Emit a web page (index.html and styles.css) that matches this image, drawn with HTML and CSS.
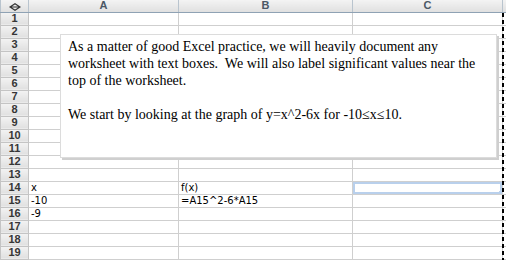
FILE: index.html
```html
<!DOCTYPE html>
<html lang="en">

<head>
    <meta charset="UTF-8">
    <title>Sheet</title>
    <link rel="stylesheet" href="styles.css">
</head>

<body>
    <div class="sheet">
        <table class="grid">
            <colgroup>
                <col class="c-head">
                <col class="c-a">
                <col class="c-b">
                <col class="c-c">
                <col class="c-d">
            </colgroup>
            <tr class="colhead">
                <th class="corner"><svg width="12" height="8" viewBox="0 0 12 8"><path d="M1 4 L6 0.8 L11 4 L6 7.2 Z M1 4 H11" fill="none" stroke="#333" stroke-width="1.2"/></svg></th>
                <th>A</th>
                <th>B</th>
                <th>C</th>
                <th></th>
            </tr>
            <tr><th>1</th><td></td><td></td><td></td><td></td></tr>
            <tr><th>2</th><td></td><td></td><td></td><td></td></tr>
            <tr><th>3</th><td></td><td></td><td></td><td></td></tr>
            <tr><th>4</th><td></td><td></td><td></td><td></td></tr>
            <tr><th>5</th><td></td><td></td><td></td><td></td></tr>
            <tr><th>6</th><td></td><td></td><td></td><td></td></tr>
            <tr><th>7</th><td></td><td></td><td></td><td></td></tr>
            <tr><th>8</th><td></td><td></td><td></td><td></td></tr>
            <tr><th>9</th><td></td><td></td><td></td><td></td></tr>
            <tr><th>10</th><td></td><td></td><td></td><td></td></tr>
            <tr><th>11</th><td></td><td></td><td></td><td></td></tr>
            <tr><th>12</th><td></td><td></td><td></td><td></td></tr>
            <tr><th>13</th><td></td><td></td><td></td><td></td></tr>
            <tr><th>14</th><td>x</td><td>f(x)</td><td class="selected"></td><td></td></tr>
            <tr><th>15</th><td>-10</td><td>=A15^2-6*A15</td><td></td><td></td></tr>
            <tr><th>16</th><td>-9</td><td></td><td></td><td></td></tr>
            <tr><th>17</th><td></td><td></td><td></td><td></td></tr>
            <tr><th>18</th><td></td><td></td><td></td><td></td></tr>
            <tr><th>19</th><td></td><td></td><td></td><td></td></tr>
        </table>

        <div class="pagebreak"></div>

        <div class="textbox">
            <p>As a matter of good Excel practice, we will heavily document any worksheet with text boxes.&nbsp; We will also label significant values near the top of the worksheet.</p>
            <p>We start by looking at the graph of y=x^2-6x for -10&le;x&le;10.</p>
        </div>
    </div>
</body>

</html>
```

FILE: styles.css
```css
* {
    padding: 0;
    margin: 0;
    box-sizing: border-box;
}

body {
    background: #fff;
    font-family: "DejaVu Sans", Verdana, sans-serif;
}

.sheet {
    position: relative;
    width: 506px;
    height: 260px;
    overflow: hidden;
}

.grid {
    border-collapse: collapse;
    table-layout: fixed;
    width: 520px;
}

.c-head { width: 28px; }
.c-a { width: 150px; }
.c-b { width: 174px; }
.c-c { width: 150px; }
.c-d { width: 18px; }

.grid td,
.grid th {
    height: 13px;
    padding: 0;
    border: 1px solid #cfcfcf;
    overflow: hidden;
    white-space: nowrap;
}

.grid td {
    font-size: 10px;
    line-height: 11px;
    padding-left: 2px;
    color: #000;
}

.grid th {
    background: linear-gradient(#f3f3f3, #e0e0e0);
    border-color: #c4c4c4;
    font-family: "Liberation Sans", Arial, sans-serif;
    font-size: 11px;
    line-height: 11px;
    font-weight: bold;
    color: #363636;
    text-align: center;
}

.colhead th {
    height: 12px;
    border-top: 0;
    border-bottom: 1px solid #8fa2b4;
    border-left: 1px solid #b9c4ce;
    border-right: 1px solid #b9c4ce;
    color: #4b5866;
}

.colhead .corner svg {
    display: block;
    margin: 2px auto 0;
}

.grid .selected {
    position: relative;
    box-shadow: inset 0 0 0 2px #b9d0ec;
}

.grid .selected::after {
    content: "";
    position: absolute;
    right: 0;
    bottom: 0;
    width: 3px;
    height: 3px;
    background: #b9d0ec;
}

.pagebreak {
    position: absolute;
    left: 502px;
    top: 13px;
    bottom: 0;
    width: 2px;
    background: repeating-linear-gradient(#000 0 4px, transparent 4px 7px);
}

.textbox {
    position: absolute;
    left: 60px;
    top: 34px;
    width: 437px;
    height: 124px;
    background: #fff;
    border: 1px solid #dcdcdc;
    box-shadow: 2px 2px 0 #cfcfcf;
    padding: 3px 7px;
    font-family: "Liberation Serif", "Times New Roman", serif;
    font-size: 14px;
    line-height: 17px;
    color: #000;
}

.textbox p {
    margin-bottom: 17px;
}
```
